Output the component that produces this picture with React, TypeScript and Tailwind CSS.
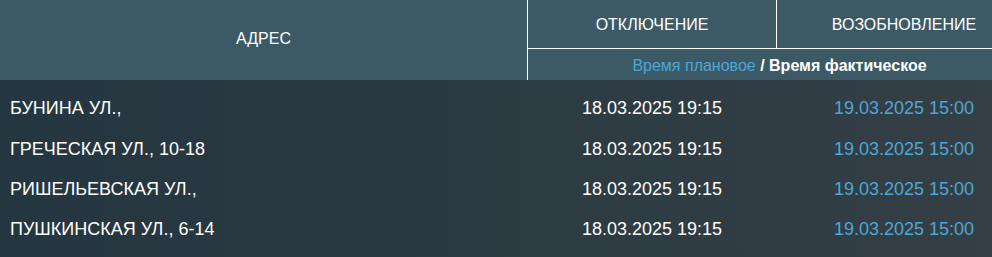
import React from "react";

const rows = [
  "БУНИНА УЛ.,",
  "ГРЕЧЕСКАЯ УЛ., 10-18",
  "РИШЕЛЬЕВСКАЯ УЛ.,",
  "ПУШКИНСКАЯ УЛ., 6-14",
];

export default function App() {
  return (
    <div
      className="w-[992px] h-[257px] overflow-hidden bg-gradient-to-r from-[#243640] to-[#343f45] text-white"
      style={{ fontFamily: '"Liberation Sans", Arial, sans-serif' }}
    >
      <div className="w-[1031px]">
        <div className="flex h-[80px] bg-[#3c5a66]">
          <div className="w-[527px] flex items-center justify-center text-[16px] pb-[3px]">АДРЕС</div>
          <div className="w-[504px] flex flex-col border-l border-white">
            <div className="flex h-[49px] border-b border-white">
              <div className="w-[249px] flex items-center justify-center text-[16px] border-r border-white pt-[2px]">ОТКЛЮЧЕНИЕ</div>
              <div className="flex-1 flex items-center justify-center text-[16px] pt-[2px]">ВОЗОБНОВЛЕНИЕ</div>
            </div>
            <div className="flex-1 flex items-center justify-center text-[16px] pt-[2px]">
              <span className="text-[#4ea6d6]">Время плановое</span>
              <span className="font-bold">&nbsp;/ Время фактическое</span>
            </div>
          </div>
        </div>
        <div className="pt-[8px]">
          {rows.map((r, i) => (
            <div key={r} className={"flex items-center text-[18px] " + (i === 0 ? "h-[41px]" : "h-[40px]")}>
              <div className="w-[527px] pl-[10px]">{r}</div>
              <div className="w-[250px] text-center">18.03.2025 19:15</div>
              <div className="w-[254px] text-center text-[#4ea6d6]">19.03.2025 15:00</div>
            </div>
          ))}
        </div>
      </div>
    </div>
  );
}
